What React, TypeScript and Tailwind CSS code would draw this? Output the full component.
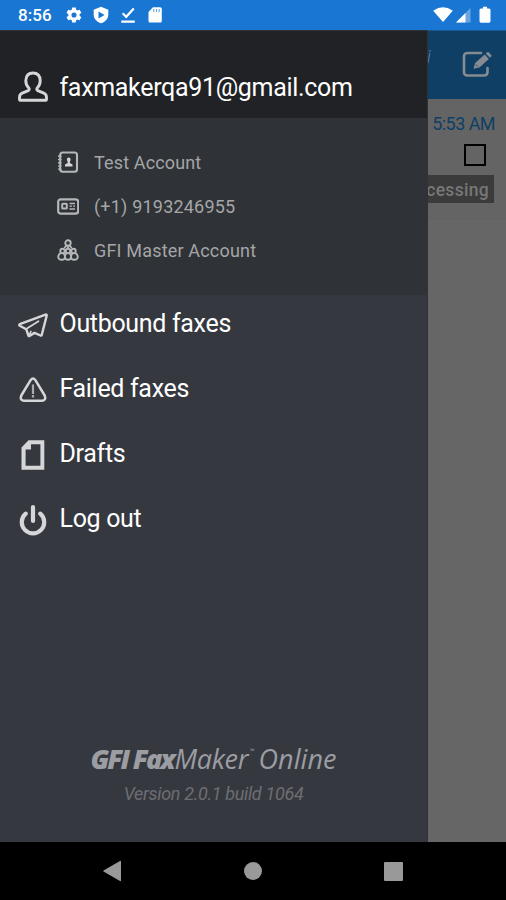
import React from "react";

const StatusBar: React.FC = () => (
  <header className="flex h-[30px] shrink-0 items-center bg-[#1976d2] pl-[18px] pr-[15px] text-white">
    <span className="w-[47px] pt-px text-[17px] font-medium leading-none tracking-[0.1px]">8:56</span>
    <svg className="h-[18px] w-[18px]" viewBox="0 0 24 24" fill="currentColor">
      <path d="M19.4 13c.1-.3.1-.7.1-1s0-.7-.1-1l2.1-1.6c.2-.2.2-.4.1-.6l-2-3.5c-.1-.2-.4-.3-.6-.2l-2.5 1c-.5-.4-1.100-.7-1.700-1L14.400 2.400c0-.2-.2-.4-.5-.4h-4c-.2 0-.4.2-.5.400L9 5.100c-.6.200-1.200.6-1.700 1l-2.500-1c-.2-.1-.5 0-.6.200l-2 3.500c-.1.200-.1.500.1.600L4.500 11c0 .3-.1.700-.1 1s0 .7.100 1l-2.200 1.600c-.2.200-.2.400-.1.600l2 3.500c.1.200.4.300.6.200l2.500-1c.5.400 1.100.7 1.700 1l.4 2.700c0 .2.300.4.500.4h4c.2 0 .5-.2.500-.4l.4-2.700c.6-.2 1.200-.6 1.700-1l2.500 1c.2.100.5 0 .6-.2l2-3.500c.1-.2.100-.5-.1-.6L19.400 13zM12 8.600a3.400 3.400 0 1 1 0 6.800 3.400 3.400 0 0 1 0-6.800z" />
    </svg>
    <svg className="ml-[9px] h-[18px] w-[18px]" viewBox="0 0 18 18">
      <path fill="currentColor" d="M9 .8l7.300 2.900v5c0 4-3 7.200-7.300 8.600-4.300-1.400-7.300-4.600-7.300-8.600v-5z" />
      <path fill="#1976d2" d="M6.500 5.400l6 3.600-6 3.600z" />
    </svg>
    <svg className="ml-[9px] h-[18px] w-[18px]" viewBox="0 0 18 18" fill="none" stroke="currentColor" strokeWidth="2.200">
      <path d="M3.700 7.200l3.500 3.600L14.800 2.400M2.300 15.600h13.500" />
    </svg>
    <svg className="ml-[9px] h-[18px] w-[18px]" viewBox="0 0 18 18">
      <path fill="currentColor" d="M7 1.300h7.200q1.600 0 1.600 1.600V15q0 1.600-1.600 1.600H4.100q-1.600 0-1.600-1.600V6z" />
      <path stroke="#1976d2" strokeWidth="1" opacity=".7" d="M7.800 3v3M10.500 3v3M13.200 3v3" />
    </svg>
    <div className="ml-auto flex items-center">
      <svg className="h-[18px] w-[20px]" viewBox="0 0 20 18" fill="currentColor">
        <path d="M.2 4.700Q10 -2 19.800 4.700L10 16z" />
      </svg>
      <svg className="ml-[3px] h-[18px] w-[15px]" viewBox="0 0 15 18">
        <path fill="currentColor" opacity=".35" d="M0 16.500L14.500 2v14.500z" />
        <path fill="currentColor" d="M0 16.500L9.500 7V16.500z" />
      </svg>
      <svg className="ml-[8px] h-[18px] w-[12px]" viewBox="0 0 12 18" fill="currentColor">
        <path d="M4 .8h4v1.800h2q1.500 0 1.500 1.500V15q0 1.700-1.500 1.700H2Q.5 16.700.5 15V4.100Q.5 2.600 2 2.600h2z" />
      </svg>
    </div>
  </header>
);

const UserIcon = () => (
  <svg className="h-8 w-8" viewBox="0 0 32 32" fill="none" stroke="#d5d6d8" strokeWidth="2.900" strokeLinejoin="round">
    <path d="M16 2C11.500 2 9 5 8.800 9.500c-.1 3.600 1.400 6 3 7.500.8.800.5 2.200-.6 2.700l-6 2.500C3.200 23 2.500 24.600 2.500 26.500v1.400q0 1.400 1.500 1.400h24q1.500 0 1.500-1.400v-1.400c0-1.900-.7-3.500-2.700-4.300l-6-2.500c-1.100-.5-1.400-1.900-.6-2.700 1.600-1.500 3.100-3.900 3-7.500C23 5 20.500 2 16 2z" />
  </svg>
);

const BookIcon = () => (
  <svg className="h-[22px] w-[22px]" viewBox="0 0 22 22" fill="none" stroke="#b5b7b9" strokeWidth="2.100">
    <rect x="3.200" y="1.500" width="16.800" height="19.200" rx="2.500" />
    <path strokeWidth="1.400" d="M1 5.200h3.500M1 8.500h3.500M1 11.800h3.500M1 15.100h3.500M1 18.100h3.500" />
    <path fill="#d2d3d4" stroke="none" d="M11.800 6.500c1.300 0 1.800.8 1.800 2 0 1-.3 1.700-.7 2.300v1.200l2.600 1.600v1.800H8v-1.800l2.700-1.600v-1.200c-.5-.6-.8-1.300-.8-2.300 0-1.200.6-2 1.900-2z" />
  </svg>
);

const CardIcon = () => (
  <svg className="h-[22px] w-[22px]" viewBox="0 0 22 22" fill="none" stroke="#b5b7b9" strokeWidth="2.200">
    <rect x="1.200" y="4.300" width="20" height="14.300" rx="2.500" />
    <rect x="5.200" y="8.800" width="4.600" height="4.800" rx=".5" strokeWidth="2" />
    <path strokeWidth="1.300" d="M12.500 8.500h5.500M12.500 11.200h2.500M16 11.200h2M12.500 14h5.500" />
  </svg>
);

const GroupIcon = () => (
  <svg className="h-[22px] w-[22px]" viewBox="0 0 22 22" fill="none" stroke="#b5b7b9" strokeWidth="1.900">
    <circle cx="11" cy="4" r="2.700" />
    <path d="M9.600 6.300L7.300 9M12.400 6.300L14.700 9M11 6.800v3" />
    <circle cx="5.500" cy="12" r="2.200" />
    <circle cx="11" cy="12" r="2.200" />
    <circle cx="16.500" cy="12" r="2.200" />
    <path d="M4 13.800c-4 2.500-3.500 7 .8 7 2 0 3.200-1 3.200-2.800 0-1.700-.7-3-1.700-4M18 13.800c4 2.500 3.500 7-.8 7-2 0-3.200-1-3.200-2.800 0-1.700.7-3 1.700-4M9.700 13.800C7 16.500 7.500 20.800 11 20.800s4-4.300 1.300-7" />
  </svg>
);

const PlaneIcon = () => (
  <svg className="h-8 w-8" viewBox="0 0 32 32" fill="none" stroke="#d5d6d8" strokeWidth="2.400" strokeLinejoin="round" strokeLinecap="round">
    <path d="M2.800 15.200L28.500 5.700Q29.900 5.200 29.700 6.600L24.800 25.800q-.3 1-1.200.7l-6.100-2.600-5 3q-.8.500-1.100-.4L9.200 20.200 2.800 16.800q-1.200-.9 0-1.600z" />
    <path strokeWidth="1.700" d="M9.500 19.800L21.500 12.200M12.300 26l1.600-3.500" />
  </svg>
);

const WarningIcon = () => (
  <svg className="h-8 w-8" viewBox="0 0 32 32" fill="none" stroke="#d5d6d8" strokeWidth="2.500" strokeLinejoin="round">
    <path d="M13.600 6.200q2.400-3.200 4.800 0l9.300 15.300q1.800 5-2.600 5.200H6.900q-4.400-.2-2.600-5.200z" />
    <path stroke="#a9abb0" strokeWidth="2.200" d="M16 10.500v9.500M16 21v2.500" />
  </svg>
);

const DraftIcon = () => (
  <svg className="h-8 w-8" viewBox="0 0 32 32">
    <path fill="#d5d6d8" fillRule="evenodd" d="M11.500 1.200h15.800v29.500H4.500V8.500zM14 5.200V10.500H8.600v16.300h14.800V5.200z" />
  </svg>
);

const PowerIcon = () => (
  <svg className="h-8 w-8" viewBox="0 0 32 32" fill="none" stroke="#d5d6d8" strokeWidth="4.200" strokeLinecap="round">
    <path d="M8.700 9.700a11.200 11.200 0 1 0 14.600 0M16 3v14" />
  </svg>
);

const accountDetails = [
  { label: "Test Account", icon: <BookIcon />, spacing: "tracking-[0.140px]" },
  { label: "(+1) 9193246955", icon: <CardIcon />, spacing: "tracking-[0.200px]" },
  { label: "GFI Master Account", icon: <GroupIcon />, spacing: "tracking-[0.180px]" },
];

const menuItems = [
  { label: "Outbound faxes", icon: <PlaneIcon /> },
  { label: "Failed faxes", icon: <WarningIcon /> },
  { label: "Drafts", icon: <DraftIcon /> },
  { label: "Log out", icon: <PowerIcon /> },
];

const Drawer: React.FC = () => (
  <aside className="flex w-[428px] shrink-0 flex-col border-r border-[#303237] bg-[#36383f]">
    <div className="flex h-[88px] items-center border-t border-[#303237] bg-[#212225] pl-[17px] pt-[25px]">
      <UserIcon />
      <span className="ml-[10.500px] whitespace-nowrap pt-px text-[25px] leading-8 tracking-[-0.320px] text-white">
        faxmakerqa91@gmail.com
      </span>
    </div>
    <ul className="flex h-[177px] flex-col bg-[#2f3236] pl-[57px] pt-[22px]">
      {accountDetails.map((item) => (
        <li key={item.label} className="flex h-11 items-center">
          {item.icon}
          <span className={`ml-[15px] whitespace-nowrap text-[18px] text-[#a5a6a8] ${item.spacing}`}>
            {item.label}
          </span>
        </li>
      ))}
    </ul>
    <nav>
      {menuItems.map((item) => (
        <a key={item.label} className="flex h-[65px] items-center pb-[5px] pl-[17px]">
          {item.icon}
          <span className="ml-[10.500px] whitespace-nowrap pb-[2px] text-[25px] leading-8 tracking-[-0.320px] text-white">
            {item.label}
          </span>
        </a>
      ))}
    </nav>
    <footer className="mt-auto flex flex-col items-center pb-[36px] italic">
      <div className="flex h-8 items-center whitespace-nowrap font-['Open_Sans','Noto_Sans',sans-serif] text-[27px] leading-8 text-[#9b9da2]">
        <span className="font-extrabold tracking-[-2.100px]">GFI&nbsp;Fax</span>
        <span className="ml-px tracking-[-0.350px]">Maker</span>
        <span className="mb-4 ml-[2px] text-[6px] leading-none">™</span>
        <span className="ml-1 tracking-[0.050px]">Online</span>
      </div>
      <p className="mt-[7px] text-[18px] leading-6 tracking-[-0.330px] text-[#6c6e73]">Version 2.0.1 build 1064</p>
    </footer>
  </aside>
);

// Inbox behind the open drawer, dimmed by the scrim
const InboxBackdrop: React.FC = () => (
  <main className="flex min-w-0 flex-1 flex-col overflow-hidden bg-[#666]">
    <div className="flex h-[69px] items-center border-t border-[#155b91] bg-[#0f3f65]">
      <svg className="mb-4 h-4 w-[3px]" viewBox="0 0 3 16" fill="none" stroke="#56748c" strokeWidth="1.200">
        <path d="M0 14L1.800 4M1 1.800h2" />
      </svg>
      <svg className="ml-[30px] h-[30px] w-[32px]" viewBox="0 0 32 30" fill="none" stroke="#858b91" strokeWidth="2.600" strokeLinecap="round">
        <path d="M20 3H6.500Q3 3 3 6.500v15.500Q3 25.500 6.500 25.500h16.500q3.500 0 3.500-3.500V18" />
        <path fill="#858b91" stroke="none" d="M12.500 18.700l1.600-5.800L23.700 4.500l4.200 4.600-9.500 8.400zM24.800 3.500l1.400-1.200q.9-.7 1.700.1l2.300 2.500q.8.900 0 1.700l-1.300 1.200z" />
        <path stroke="#0f3f65" strokeWidth=".7" d="M15 14.700l1.800 1.800" />
      </svg>
    </div>
    <div className="flex h-[121px] flex-col items-end border-b border-[#626262] bg-[#646464] pr-[11px] pt-[13px]">
      <time className="whitespace-nowrap text-[18px] leading-6 tracking-[-0.550px] text-[#0f3f65]">5:53 AM</time>
      <div className="mr-[9px] mt-[8px] h-[22px] w-[22px] border-2 border-black" />
      <div className="mr-px mt-[9px] flex h-[28px] w-[66px] items-center justify-end bg-[#3b3b3b] pr-[5px] pt-[2px] text-[17.500px] font-medium tracking-[0.300px] text-[#777]">
        cessing
      </div>
    </div>
  </main>
);

const NavigationBar: React.FC = () => (
  <footer className="flex h-[58px] shrink-0 items-center justify-between bg-black pl-[102px] pr-[103px]">
    <svg className="h-[22px] w-5" viewBox="0 0 20 22" fill="#999">
      <path d="M18 1q1-.5 1 .5v19q0 1-1 .5L1.500 11.500q-.5-.5 0-1z" />
    </svg>
    <div className="h-[18px] w-[18px] rounded-full bg-[#999]" />
    <div className="h-[19px] w-[19px] rounded-[1px] bg-[#999]" />
  </footer>
);

export default function App() {
  return (
    <div className="flex h-[900px] w-[506px] flex-col overflow-hidden bg-black font-[Roboto,sans-serif]">
      <StatusBar />
      <div className="flex h-[812px] shrink-0">
        <Drawer />
        <InboxBackdrop />
      </div>
      <NavigationBar />
    </div>
  );
}
